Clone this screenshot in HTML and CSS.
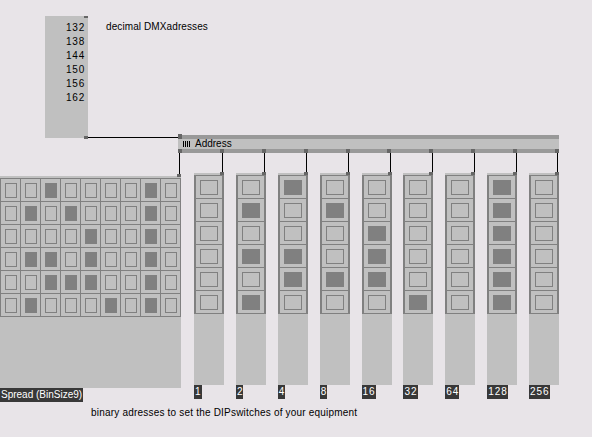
FILE: index.html
```html
<!DOCTYPE html>
<html lang="en">
<head>
  <meta charset="UTF-8" />
  <title>DMX DIP switches</title>
  <link rel="stylesheet" href="styles.css">
</head>
<body>
<div class="patch">
  <!-- wires -->
  <svg class="wires" width="592" height="437" viewBox="0 0 592 437">
    <path d="M88 137.5H178" />
    <path d="M179.5 153V175" />
    <path d="M222.5 153V172M264.5 153V172M306.5 153V172M348.5 153V172M390.5 153V172M432.5 153V172M474.5 153V172M516.5 153V172M557.5 153V172" />
  </svg>

  <!-- decimal IOBox -->
  <div class="node iobox">
    <span class="pin pin-tr"></span>
    <div class="values">
      <div>132</div><div>138</div><div>144</div><div>150</div><div>156</div><div>162</div>
    </div>
    <span class="pin pin-br"></span>
  </div>
  <p class="comment comment-top">decimal DMXadresses</p>

  <!-- Address node -->
  <div class="node address">
    <span class="pin pin-in"></span>
    <div class="address-body"><span class="spread-icon"></span>Address</div>
    <div class="outs">
      <span></span><span></span><span></span><span></span><span></span>
      <span></span><span></span><span></span><span></span><span></span>
    </div>
  </div>

  <!-- spread matrix -->
  <div class="spread-wrap">
    <div class="node spread">
      <span class="pin pin-top"></span>
      <div class="matrix">
        <span class="cell"></span><span class="cell"></span><span class="cell on"></span><span class="cell"></span><span class="cell"></span><span class="cell"></span><span class="cell"></span><span class="cell on"></span><span class="cell"></span>
        <span class="cell"></span><span class="cell on"></span><span class="cell"></span><span class="cell on"></span><span class="cell"></span><span class="cell"></span><span class="cell"></span><span class="cell on"></span><span class="cell"></span>
        <span class="cell"></span><span class="cell"></span><span class="cell"></span><span class="cell"></span><span class="cell on"></span><span class="cell"></span><span class="cell"></span><span class="cell on"></span><span class="cell"></span>
        <span class="cell"></span><span class="cell on"></span><span class="cell on"></span><span class="cell"></span><span class="cell on"></span><span class="cell"></span><span class="cell"></span><span class="cell on"></span><span class="cell"></span>
        <span class="cell"></span><span class="cell"></span><span class="cell on"></span><span class="cell on"></span><span class="cell on"></span><span class="cell"></span><span class="cell"></span><span class="cell on"></span><span class="cell"></span>
        <span class="cell"></span><span class="cell on"></span><span class="cell"></span><span class="cell"></span><span class="cell"></span><span class="cell on"></span><span class="cell"></span><span class="cell on"></span><span class="cell"></span>
      </div>
    </div>
    <span class="label">Spread (BinSize9)</span>
  </div>

  <!-- bit columns -->
  <div class="columns">
    <div class="col-wrap">
      <div class="node col"><span class="pin pin-top"></span>
        <div class="stack"><span class="cell"></span><span class="cell"></span><span class="cell"></span><span class="cell"></span><span class="cell"></span><span class="cell"></span></div>
      </div>
      <span class="label num">1</span>
    </div>
    <div class="col-wrap">
      <div class="node col"><span class="pin pin-top"></span>
        <div class="stack"><span class="cell"></span><span class="cell on"></span><span class="cell"></span><span class="cell on"></span><span class="cell"></span><span class="cell on"></span></div>
      </div>
      <span class="label num">2</span>
    </div>
    <div class="col-wrap">
      <div class="node col"><span class="pin pin-top"></span>
        <div class="stack"><span class="cell on"></span><span class="cell"></span><span class="cell"></span><span class="cell on"></span><span class="cell on"></span><span class="cell"></span></div>
      </div>
      <span class="label num">4</span>
    </div>
    <div class="col-wrap">
      <div class="node col"><span class="pin pin-top"></span>
        <div class="stack"><span class="cell"></span><span class="cell on"></span><span class="cell"></span><span class="cell"></span><span class="cell on"></span><span class="cell"></span></div>
      </div>
      <span class="label num">8</span>
    </div>
    <div class="col-wrap">
      <div class="node col"><span class="pin pin-top"></span>
        <div class="stack"><span class="cell"></span><span class="cell"></span><span class="cell on"></span><span class="cell on"></span><span class="cell on"></span><span class="cell"></span></div>
      </div>
      <span class="label num">16</span>
    </div>
    <div class="col-wrap">
      <div class="node col"><span class="pin pin-top"></span>
        <div class="stack"><span class="cell"></span><span class="cell"></span><span class="cell"></span><span class="cell"></span><span class="cell"></span><span class="cell on"></span></div>
      </div>
      <span class="label num">32</span>
    </div>
    <div class="col-wrap">
      <div class="node col"><span class="pin pin-top"></span>
        <div class="stack"><span class="cell"></span><span class="cell"></span><span class="cell"></span><span class="cell"></span><span class="cell"></span><span class="cell"></span></div>
      </div>
      <span class="label num">64</span>
    </div>
    <div class="col-wrap">
      <div class="node col"><span class="pin pin-top"></span>
        <div class="stack"><span class="cell on"></span><span class="cell on"></span><span class="cell on"></span><span class="cell on"></span><span class="cell on"></span><span class="cell on"></span></div>
      </div>
      <span class="label num">128</span>
    </div>
    <div class="col-wrap">
      <div class="node col"><span class="pin pin-top"></span>
        <div class="stack"><span class="cell"></span><span class="cell"></span><span class="cell"></span><span class="cell"></span><span class="cell"></span><span class="cell"></span></div>
      </div>
      <span class="label num">256</span>
    </div>
  </div>

  <p class="comment comment-bottom">binary adresses to set the DIPswitches of your equipment</p>
</div>
</body>
</html>
```

FILE: styles.css
```css
/* Reset & canvas */
* { margin: 0; padding: 0; box-sizing: border-box; }
body {
  background: #e8e4e8; color: #000;
  font-family: 'Liberation Sans', Arial, sans-serif; font-size: 10px;
}
.patch { position: relative; width: 592px; height: 437px; overflow: hidden; }
/* Wires */
.wires { position: absolute; top: 0; left: 0; z-index: 2; pointer-events: none; }
.wires path { stroke: #000; stroke-width: 1; fill: none; shape-rendering: crispEdges; }
/* Nodes & pins */
.node { position: absolute; background: #c0c0c0; }
.pin { position: absolute; width: 4px; height: 3px; background: #666; z-index: 3; }
/* Decimal IOBox */
.iobox { left: 45px; top: 16px; width: 43px; height: 122px; }
.iobox .pin-tr { top: 0; right: 0; height: 2px; }
.iobox .pin-br { bottom: -1px; right: 0; }
.values { padding: 5px 3px 0 0; text-align: right; line-height: 14px; letter-spacing: .8px; }
/* Comments */
.comment { position: absolute; line-height: 12px; white-space: nowrap; }
.comment-top { left: 106px; top: 21px; letter-spacing: .1px; }
.comment-bottom { left: 91px; top: 407px; letter-spacing: .2px; }
/* Address node */
.address {
  left: 178px; top: 135px; width: 381px; height: 18px;
  border-top: 4px solid #999; border-bottom: 4px solid #999;
}
.address .pin-in { top: -5px; left: 0; height: 5px; }
.address-body { display: flex; align-items: center; height: 10px; padding-left: 5px; line-height: 10px; }
.spread-icon {
  display: inline-block; width: 7px; height: 6px; margin-right: 5px;
  background: repeating-linear-gradient(90deg, #000 0 1px, transparent 1px 2px);
}
.outs { position: absolute; left: 0; right: 0; bottom: -4px; display: flex; justify-content: space-between; }
.outs span { width: 4px; height: 4px; background: #666; }
/* Labels */
.label {
  display: inline-block; height: 14px; line-height: 14px; padding: 0 1px;
  background: #383838; color: #fff; white-space: nowrap;
}
.label.num { letter-spacing: 1px; padding: 0 0 0 1px; }
/* Spread matrix */
.spread-wrap { position: absolute; left: 0; top: 176px; display: flex; flex-direction: column; align-items: flex-start; }
.spread { position: relative; width: 181px; height: 212px; padding-top: 2px; }
.spread .pin-top { top: -2px; right: 0; }
.matrix {
  display: grid; grid-template-columns: repeat(9, 19px); grid-auto-rows: 22px;
  gap: 1px; padding: 1px; background: #808080; width: 181px;
}
.cell { display: flex; align-items: center; justify-content: center; background: #c0c0c0; }
.cell::after { content: ''; width: 10px; height: 13px; border: 1px solid #808080; }
.cell.on::after { background: #808080; }
/* Bit columns */
.columns { position: absolute; left: 194px; top: 173px; display: flex; gap: 11.875px; }
.col-wrap { display: flex; flex-direction: column; align-items: flex-start; }
.col { position: relative; width: 30px; height: 212px; padding-top: 2px; }
.col .pin-top { top: -1px; right: 0; }
.stack {
  display: grid; grid-auto-rows: 22px; gap: 1px;
  padding: 1px 2px; background: #808080;
}
.stack .cell::after { width: 16px; }
```
